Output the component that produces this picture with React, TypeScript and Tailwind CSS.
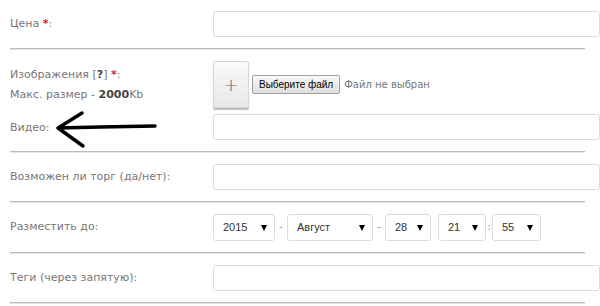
const label = "font-['DejaVu_Sans',sans-serif] text-[11px] text-[#777]";
const ctrl = "font-['Liberation_Sans',Arial,sans-serif] text-[11px] text-[#333]";

function Sep() {
  return <div className="w-[575px] border-t border-b border-t-[#bcbcbc] border-b-[#e6e6e6]" />;
}

function Star() {
  return <span className="text-[#e01818] font-bold">*</span>;
}

function TextInput() {
  return <div className="h-[26px] w-full rounded-[3px] border border-[#dcdcdc] bg-white" />;
}

function Row({ title, children }: any) {
  return (
    <div className="flex items-center py-[11px]">
      <div className={`w-[203px] ${label}`}>{title}</div>
      <div className="flex-1 flex items-center">{children}</div>
    </div>
  );
}

function Select({ value, width }: { value: string; width: string }) {
  return (
    <div
      className={`${width} h-[27px] flex items-center justify-between rounded-[3px] border border-[#dcdcdc] bg-white pl-[9px] pr-[7px] ${ctrl}`}
    >
      <span>{value}</span>
      <span className="w-0 h-0 border-l-[3px] border-r-[3px] border-t-[6px] border-l-transparent border-r-transparent border-t-black" />
    </div>
  );
}

function Gap({ ch, w }: { ch: string; w: string }) {
  return <span className={`${w} text-center ${label} text-[#999]`}>{ch}</span>;
}

export default function App() {
  return (
    <div className="relative w-[600px] h-[306px] overflow-hidden bg-white pl-[10px]">
      <Row
        title={
          <>
            Цена <Star />:
          </>
        }
      >
        <TextInput />
      </Row>
      <Sep />

      <div className="flex flex-col pt-[11px] pb-[11px]">
        <div className="flex items-center">
          <div className={`w-[203px] ${label} leading-[20px]`}>
            <div>
              Изображения [<b className="text-[#444]">?</b>] <Star />:
            </div>
            <div>
              Макс. размер - <b className="text-[#444]">2000</b>Kb
            </div>
          </div>
          <div className="flex items-center">
            <div className="w-[36px] h-[47px] flex items-center justify-center rounded-[2px] border border-[#d6d6d6] bg-gradient-to-b from-[#f9f9f9] to-[#e8e8e8] shadow-[0_2px_1px_#bdbdbd] text-[18px] font-light text-[#666] font-['DejaVu_Sans',sans-serif]">
              +
            </div>
            <div className="ml-[3px] h-[19px] px-[6px] flex items-center border border-[#a0a0a0] rounded-[2px] bg-gradient-to-b from-[#fafafa] to-[#dedede] font-['Liberation_Sans',Arial,sans-serif] text-[10px] text-black">
              Выберите файл
            </div>
            <span className="ml-[4px] font-['DejaVu_Sans',sans-serif] text-[10px] text-[#777]">
              Файл не выбран
            </span>
          </div>
        </div>
        <div className="flex items-center mt-[6px]">
          <div className={`w-[203px] ${label} pt-[2px]`}>Видео:</div>
          <div className="flex-1">
            <TextInput />
          </div>
        </div>
      </div>
      <Sep />

      <Row title="Возможен ли торг (да/нет):">
        <TextInput />
      </Row>
      <Sep />

      <Row title="Разместить до:">
        <Select value="2015" width="w-[62px]" />
        <Gap ch="-" w="w-[12px]" />
        <Select value="Август" width="w-[86px]" />
        <Gap ch="-" w="w-[12px]" />
        <Select value="28" width="w-[46px]" />
        <span className="w-[7px]" />
        <Select value="21" width="w-[48px]" />
        <Gap ch=":" w="w-[6px]" />
        <Select value="55" width="w-[49px]" />
      </Row>
      <Sep />

      <Row title="Теги (через запятую):">
        <TextInput />
      </Row>
      <Sep />

      <svg
        className="absolute left-0 top-0 pointer-events-none"
        width="600"
        height="306"
        viewBox="0 0 600 306"
      >
        <path
          d="M155 126 L100 127 L58 128 M82 113 L58 128 L83 146"
          fill="none"
          stroke="#000"
          strokeWidth="3.5"
          strokeLinecap="round"
          strokeLinejoin="round"
        />
      </svg>
    </div>
  );
}
